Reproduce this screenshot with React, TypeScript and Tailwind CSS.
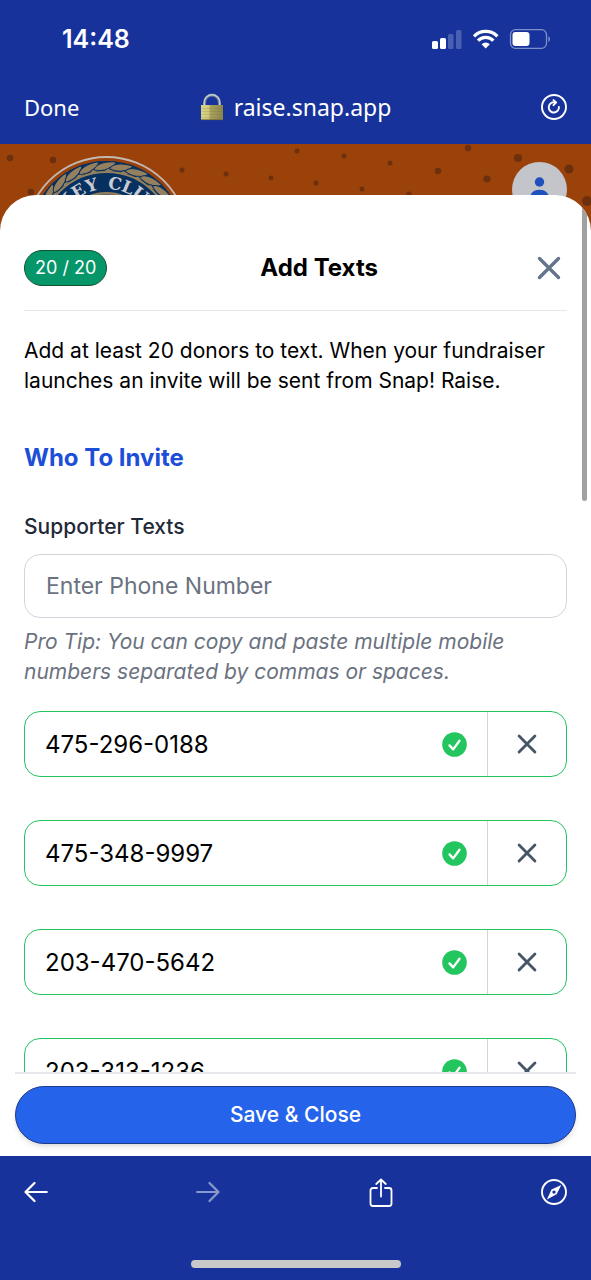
import { useState } from "react";
import clsx from "clsx";

const initialNumbers = [
  "475-296-0188",
  "475-348-9997",
  "203-470-5642",
  "203-313-1236",
];

// x, y, radius of the speckles on the campaign banner
const speckles = [
  [10, 14, 3.3],
  [53, 16, 3.3],
  [31, 48, 3.3],
  [139, 21, 2.5],
  [182, 26, 2.5],
  [226, 30, 2.5],
  [271, 34, 2.4],
  [297, 7, 2.5],
  [344, 12, 2.5],
  [390, 19, 2.5],
  [316, 39, 2.5],
  [362, 45, 2.5],
  [409, 50, 2.6],
  [438, 27, 3.2],
  [468, 4, 3.2],
  [487, 35, 3.6],
  [518, 14, 4.1],
  [569, 25, 4.6],
  [587, 57, 5],
];

const ropeAngles = [-78, -65, -52, -39, -26, -13, 0, 13, 26, 39, 52, 65, 78];

const crestLetters = [
  { char: "K", angle: -47 },
  { char: "E", angle: -31 },
  { char: "Y", angle: -16 },
  { char: "C", angle: 9 },
  { char: "L", angle: 23 },
  { char: "U", angle: 38 },
  { char: "B", angle: 54 },
];

function LockIcon() {
  return (
    <svg className="h-7 w-6" viewBox="0 0 24 28" aria-hidden="true">
      <defs>
        <linearGradient id="lock-body" x1="0" x2="1">
          <stop offset="0" stopColor="#d9d488" />
          <stop offset="0.35" stopColor="#cfc97c" />
          <stop offset="0.42" stopColor="#a9a35f" />
          <stop offset="1" stopColor="#8b8549" />
        </linearGradient>
      </defs>
      <path
        d="M4.6 13V9.5a7.4 7.4 0 0 1 14.8 0V13"
        fill="none"
        stroke="#6f7f91"
        strokeWidth="3"
      />
      <path
        d="M4.2 13V9.5a7.8 7.8 0 0 1 15.6 0V13"
        fill="none"
        stroke="#c3d0da"
        strokeWidth="1.4"
      />
      <rect x="1" y="12" width="22" height="15" fill="url(#lock-body)" />
      <path
        d="M1 15.5h22M1 18.5h22M1 21.5h22M1 24.5h22"
        stroke="#77713a"
        strokeOpacity="0.3"
        strokeWidth="0.7"
      />
      <path d="M1 26.6h22" stroke="#6f6a38" strokeWidth="0.8" />
    </svg>
  );
}

function CloseIcon({ className }: { className?: string }) {
  return (
    <svg
      className={className}
      viewBox="0 0 24 24"
      fill="none"
      stroke="currentColor"
      strokeWidth="3.4"
      strokeLinecap="round"
      aria-hidden="true"
    >
      <path d="M2.5 2.5l19 19M21.5 2.5l-19 19" />
    </svg>
  );
}

function StatusBar() {
  return (
    <div className="flex h-20 items-center justify-between pr-10 pl-[62px]">
      <span className="text-[25px] font-semibold">14:48</span>
      <svg
        className="h-6 w-[120px]"
        viewBox="0 0 120 24"
        fill="#fff"
        aria-label="Signal, Wi-Fi and battery"
      >
        <rect x="1" y="13" width="6" height="8" rx="1.5" />
        <rect x="9" y="10" width="6" height="11" rx="1.5" />
        <rect x="17" y="6" width="5.5" height="15" rx="1.5" fillOpacity="0.22" />
        <rect x="25" y="2" width="5.5" height="19" rx="1.5" fillOpacity="0.22" />
        <g fill="none" stroke="#fff" strokeWidth="3.3">
          <path d="M43 8.3a16.3 16.3 0 0 1 23.4 0" />
          <path d="M47 12.700a10.600 10.600 0 0 1 15.400 0" />
        </g>
        <path d="M50.600 16.200a6 6 0 0 1 8.200 0L54.700 20.600z" />
        <rect
          x="79.5"
          y="1.700"
          width="36"
          height="18.600"
          rx="5"
          fill="none"
          stroke="#fff"
          strokeOpacity="0.45"
          strokeWidth="1.3"
        />
        <rect x="81.5" y="4" width="17" height="14" rx="3" />
        <path d="M117.400 8.200c2 .9 2 4.800 0 5.800z" fillOpacity="0.5" />
      </svg>
    </div>
  );
}

function BrowserHeader() {
  return (
    <header className="shrink-0 bg-[#17339b] text-white">
      <StatusBar />
      <div className="flex h-16 items-start justify-between px-6 pt-[13px] font-['Noto_Sans',sans-serif] text-[22px] leading-7">
        <button type="button" className="w-16 text-left">
          Done
        </button>
        <div className="flex items-center gap-[10px]">
          <LockIcon />
          <span className="text-[23px] leading-7">raise.snap.app</span>
        </div>
        <button
          type="button"
          aria-label="Reload"
          className="flex w-16 justify-end"
        >
          <svg
            className="size-7"
            viewBox="0 0 28 28"
            fill="none"
            stroke="#fff"
            strokeWidth="1.9"
            strokeLinecap="round"
          >
            <circle cx="15" cy="14" r="12" />
            <path d="M19.9 13.9a5.1 5.1 0 1 1-5.2-4.600h1.600" />
            <path d="M14.5 7.100l2.700 2.300-2.700 2.800" strokeLinejoin="round" />
          </svg>
        </button>
      </div>
    </header>
  );
}

function ClubCrest() {
  return (
    <svg className="mt-3 ml-6 h-[164px] w-[166px]" viewBox="0 0 166 164">
      <circle
        cx="82.5"
        cy="82"
        r="81"
        fill="#9b420b"
        stroke="#c4b8b4"
        strokeWidth="1.8"
      />
      <circle cx="82.5" cy="82" r="77" fill="#06305f" />
      {ropeAngles.map((angle) => (
        <g
          key={angle}
          transform={`rotate(${angle} 82.5 82)`}
          fill="#94805f"
          stroke="#06305f"
          strokeWidth="1"
        >
          <path d="M70 14c1-5 9-9 22-8-2 6-12 10-22 8z" />
          <path d="M79 16c4-4 9-6 19-6-3 4-10 7-19 6z" />
        </g>
      ))}
      <circle
        cx="82.5"
        cy="82"
        r="66"
        fill="#06305f"
        stroke="#94805f"
        strokeWidth="2"
      />
      <circle
        cx="82.5"
        cy="82"
        r="45"
        fill="#5c625f"
        stroke="#94805f"
        strokeWidth="2"
      />
      {crestLetters.map(({ char, angle }) => (
        <text
          key={char}
          x="82.5"
          y="33"
          textAnchor="middle"
          transform={`rotate(${angle} 82.5 82)`}
          fill="#c8ccd2"
          className="font-['DejaVu_Serif',serif] text-[17px] font-bold"
        >
          {char}
        </text>
      ))}
    </svg>
  );
}

function CampaignBanner() {
  return (
    <div className="absolute inset-x-0 top-0 flex h-28 items-start justify-between overflow-hidden bg-[#9b420b]">
      <svg className="absolute inset-0 size-full" fill="#6d300e" aria-hidden="true">
        {speckles.map(([x, y, r]) => (
          <circle key={`${x}-${y}`} cx={x} cy={y} r={r} />
        ))}
      </svg>
      <div className="relative">
        <ClubCrest />
      </div>
      <button
        type="button"
        aria-label="Account"
        className="relative mt-[18px] mr-6 size-[55px] rounded-full bg-[#c4c5ca]"
      >
        <svg viewBox="0 0 55 55" fill="#1f50bd">
          <circle cx="27.5" cy="20" r="4.7" />
          <path d="M18 36c0-5 4-8.3 9.5-8.3S37 31 37 36z" />
        </svg>
      </button>
    </div>
  );
}

interface PhoneRowProps {
  value: string;
  onChange: (value: string) => void;
  onRemove: () => void;
}

function PhoneRow({ value, onChange, onRemove }: PhoneRowProps) {
  return (
    <li className="flex h-[66px] shrink-0 items-stretch rounded-2xl border border-[#22c55e] bg-white">
      <input
        type="tel"
        aria-label="Supporter phone number"
        value={value}
        onChange={(e) => onChange(e.target.value)}
        className="min-w-0 flex-1 bg-transparent px-5 pt-0.5 text-2xl text-black outline-none"
      />
      <svg
        className="mr-5 size-[25px] shrink-0 self-center"
        viewBox="0 0 25 25"
        aria-label="Valid"
      >
        <circle cx="12.5" cy="12.5" r="12.3" fill="#22c55e" />
        <path
          d="M7.5 13.4l3.7 4 6.3-8.6"
          fill="none"
          stroke="#fff"
          strokeWidth="2.3"
          strokeLinecap="round"
          strokeLinejoin="round"
        />
      </svg>
      <button
        type="button"
        aria-label={`Remove ${value}`}
        onClick={onRemove}
        className="flex w-[79px] items-center justify-center border-l border-[#d1d5db] text-[#475569]"
      >
        <CloseIcon className="size-5" />
      </button>
    </li>
  );
}

function BrowserToolbar() {
  return (
    <footer className="flex h-[124px] shrink-0 flex-col items-center justify-between bg-[#17339b] pt-5 pb-3 text-white">
      <nav className="flex w-full items-center justify-between px-6">
        {["Back", "Forward"].map((label) => (
          <button
            key={label}
            type="button"
            aria-label={label}
            disabled={label === "Forward"}
            className={clsx(label === "Forward" && "-scale-x-100 opacity-50")}
          >
            <svg
              className="h-8 w-6"
              viewBox="0 0 24 32"
              fill="none"
              stroke="currentColor"
              strokeWidth="2.2"
              strokeLinecap="round"
              strokeLinejoin="round"
            >
              <path d="M22.8 16H1.5M10.5 7l-9 9 9 9" />
            </svg>
          </button>
        ))}
        <button type="button" aria-label="Share">
          <svg
            className="h-8 w-6"
            viewBox="0 0 24 32"
            fill="none"
            stroke="currentColor"
            strokeWidth="1.8"
            strokeLinecap="round"
            strokeLinejoin="round"
          >
            <path d="M8 12H4a2.500 2.500 0 0 0-2.500 2.500v13A2.500 2.500 0 0 0 4 30h16a2.500 2.500 0 0 0 2.500-2.500v-13A2.500 2.500 0 0 0 20 12h-4" />
            <path d="M12 20.5V3.5M7.2 8L12 3.5 16.8 8" />
          </svg>
        </button>
        <button type="button" aria-label="Open in Safari">
          <svg className="size-[26px]" viewBox="0 0 26 26" aria-hidden="true">
            <circle
              cx="13"
              cy="13"
              r="12"
              fill="none"
              stroke="#fff"
              strokeWidth="1.9"
            />
            <path
              fill="#fff"
              fillRule="evenodd"
              d="M20.3 5.9l-4.7 9.3-9.7 5.2 4.6-9.800zM13 11.400a1.700 1.700 0 1 0 0 3.400 1.700 1.700 0 0 0 0-3.400z"
            />
          </svg>
        </button>
      </nav>
      <div className="h-2 w-[210px] rounded-full bg-[#c9c9c9]" />
    </footer>
  );
}

export default function App() {
  const [numbers, setNumbers] = useState(initialNumbers);

  const updateNumber = (index: number, value: string) =>
    setNumbers(numbers.map((n, i) => (i === index ? value : n)));

  const removeNumber = (index: number) =>
    setNumbers(numbers.filter((_, i) => i !== index));

  return (
    <div className="flex h-screen flex-col overflow-hidden bg-white font-[Inter,sans-serif]">
      <BrowserHeader />

      <main className="relative flex min-h-0 flex-1 flex-col">
        <CampaignBanner />

        <section className="relative mt-[51px] flex min-h-0 flex-1 flex-col overflow-hidden rounded-t-[36px] bg-white">
          <div className="flex min-h-0 flex-1 flex-col overflow-hidden px-6">
            <div className="flex shrink-0 items-center justify-between border-b border-[#e5e7eb] pt-[55px] pb-6">
              <span className="flex h-9 items-center rounded-full border border-[#14532d] bg-[#059669] px-[10px] text-lg text-white">
                20 / 20
              </span>
              <h1 className="text-2xl font-bold text-black">Add Texts</h1>
              <button
                type="button"
                aria-label="Close"
                className="flex size-9 items-center justify-center text-[#64748b]"
              >
                <CloseIcon className="size-6" />
              </button>
            </div>

            <p className="mt-[25px] shrink-0 text-[21px] leading-[30px] text-black">
              Add at least 20 donors to text. When your fundraiser launches an
              invite will be sent from Snap! Raise.
            </p>

            <h2 className="mt-11 shrink-0 text-2xl leading-9 font-bold text-[#1d4ed8]">
              Who To Invite
            </h2>

            <label
              htmlFor="phone"
              className="mt-9 shrink-0 text-[21px] leading-[30px] font-medium text-[#1f2937]"
            >
              Supporter Texts
            </label>
            <input
              id="phone"
              type="tel"
              placeholder="Enter Phone Number"
              className="mt-3 h-16 w-full shrink-0 rounded-2xl border border-[#d1d5db] px-[21px] text-[23px] placeholder:text-[#6b7280]"
            />
            <p className="mt-[9px] shrink-0 text-[21px] leading-[30px] text-[#6b7280] italic">
              Pro Tip: You can copy and paste multiple mobile numbers separated
              by commas or spaces.
            </p>

            <ul className="mt-6 flex flex-col gap-[43px]">
              {numbers.map((number, i) => (
                <PhoneRow
                  key={i}
                  value={number}
                  onChange={(value) => updateNumber(i, value)}
                  onRemove={() => removeNumber(i)}
                />
              ))}
            </ul>
          </div>

          <div className="absolute top-0 right-1 h-[306px] w-[5px] rounded-full bg-[#a1a1a1]" />

          <div className="mx-[15px] shrink-0 border-t-2 border-[#e5e7eb] bg-white pt-3 pb-3">
            <button
              type="button"
              className="h-[58px] w-full rounded-full border border-[#1e3a8a] bg-[#2563eb] text-[21px] font-medium text-white shadow-md"
            >
              Save &amp; Close
            </button>
          </div>
        </section>
      </main>

      <BrowserToolbar />
    </div>
  );
}
